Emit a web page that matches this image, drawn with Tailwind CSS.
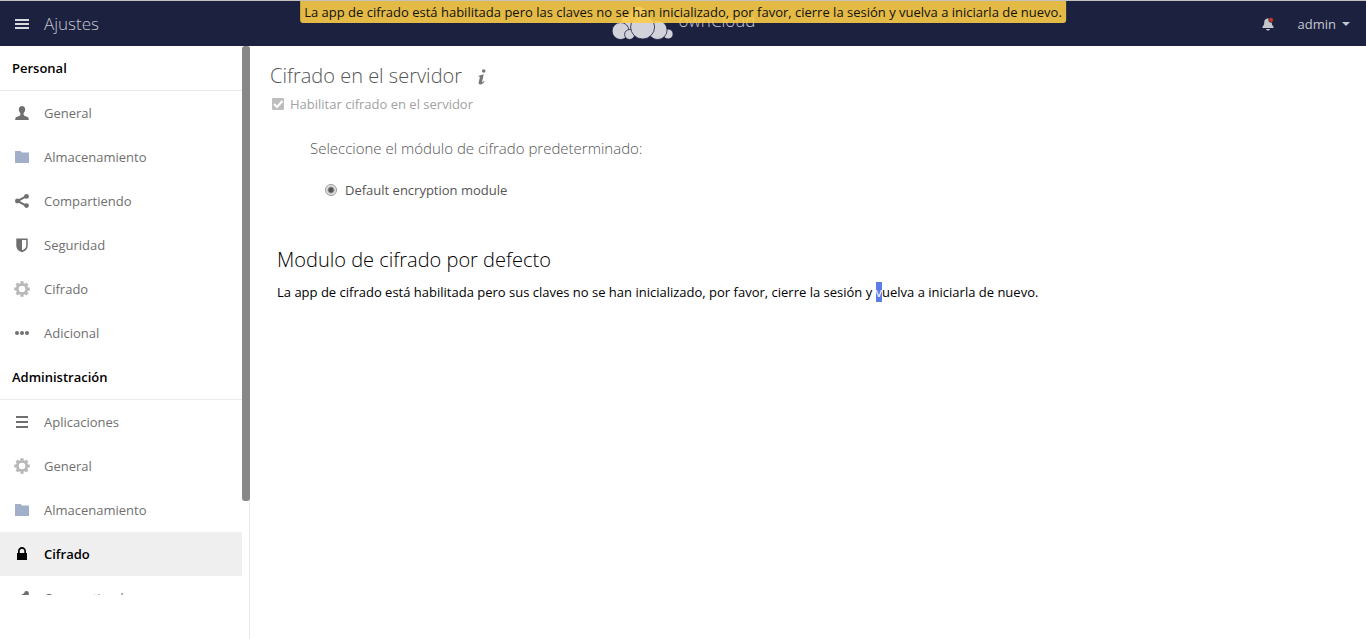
<!DOCTYPE html>
<html lang="es">
<head>
<meta charset="utf-8">
<meta name="viewport" content="width=device-width, initial-scale=1">
<title>Ajustes - ownCloud</title>
<script src="https://cdn.jsdelivr.net/npm/@tailwindcss/browser@4"></script>
</head>
<body class="flex h-screen flex-col overflow-hidden bg-white font-['Open_Sans',sans-serif] text-[13px] leading-5 text-black">
<svg class="hidden" aria-hidden="true">
  <symbol id="user" viewBox="0 0 16 16"><path d="M8 1C6.200 1 4.800 2.300 4.800 4.200c0 1 .3 2 .8 2.900.3.500.7.900.8 1.400.1.500.1 1-.1 1.500-.2.500-.6.700-1.100.9L2.400 12c-.7.400-1 1-1.100 1.600L1.200 15h13.600l-.1-1.400c-.1-.7-.4-1.300-1.100-1.600l-2.800-1.100c-.5-.2-.9-.4-1.100-.9-.2-.5-.2-1-.1-1.500.1-.5.5-.9.800-1.400.5-.9.800-1.900.8-2.900C11.200 2.300 9.800 1 8 1z"/></symbol>
  <symbol id="folder" viewBox="0 0 16 16"><path d="M1 2h5.500l1.500 1.500h7V14H1z"/></symbol>
  <symbol id="share" viewBox="0 0 16 16"><path d="M12.500 3.200 3.500 8l9 4.800" fill="none" stroke="currentColor" stroke-width="2"/><circle cx="3.400" cy="8" r="2.400"/><circle cx="12.500" cy="3.400" r="2.400"/><circle cx="12.500" cy="12.600" r="2.400"/></symbol>
  <symbol id="shield" viewBox="0 0 16 16"><path fill-rule="evenodd" d="M2.300 1.500h11.400v7c0 3.800-2.700 5.700-5.700 6.700-3-1-5.700-2.900-5.700-6.700zM8 3v10.300c2.500-1 4.200-2.400 4.200-4.900V3z"/></symbol>
  <symbol id="gear" viewBox="0 0 16 16"><g fill="none" stroke="currentColor"><circle cx="8" cy="8" r="4.700" stroke-width="2.800"/><path stroke-width="3.200" d="M8 .2v2.400M8 13.400v2.400M.2 8h2.400M13.400 8h2.400M2.600 2.600l1.500 1.500M11.900 11.900l1.500 1.500M13.400 2.600l-1.500 1.500M4.100 11.900l-1.500 1.500"/></g></symbol>
  <symbol id="more" viewBox="0 0 16 16"><circle cx="3" cy="8" r="2"/><circle cx="8" cy="8" r="2"/><circle cx="13" cy="8" r="2"/></symbol>
  <symbol id="list" viewBox="0 0 16 16"><path d="M2 2h12v2H2zM2 7h12v2H2zM2 12h12v2H2z"/></symbol>
  <symbol id="lock" viewBox="0 0 16 16"><path fill-rule="evenodd" d="M8 1C5.800 1 4 2.800 4 5v2H3v7h10V7h-1V5c0-2.200-1.800-4-4-4zm0 1.700c1.300 0 2.300 1 2.300 2.300v2H5.700V5c0-1.300 1-2.300 2.300-2.300z"/></symbol>
</svg>

<header class="relative flex h-[46px] shrink-0 items-center justify-between border-t border-[#c4c0bc] bg-[#1d2140] pl-3.5 pr-4 text-[#c4c6ce]">
  <button type="button" class="flex items-center gap-3.5" aria-label="Menú de aplicaciones">
    <svg class="size-4" viewBox="0 0 16 16" fill="#d8d9e0"><path d="M1 3h14v2H1zM1 7h14v2H1zM1 11h14v2H1z"/></svg>
    <span class="text-[17px] font-light leading-6">Ajustes</span>
  </button>
  <a href="#" class="absolute left-1/2 top-1 flex -translate-x-1/2 items-start gap-1" aria-label="ownCloud">
    <svg class="h-9 w-[64px]" viewBox="0 0 64 36" fill="#d2d2da" stroke="#1d2140" stroke-width=".8">
      <circle cx="19" cy="18" r="9"/><circle cx="28" cy="10.500" r="9"/><circle cx="57.500" cy="29" r="5"/><circle cx="10" cy="26" r="8.500"/><circle cx="19" cy="29.500" r="5"/><circle cx="47" cy="25" r="9.500"/><circle cx="32" cy="22" r="12"/>
    </svg>
    <span class="pt-1 text-[17px] font-light leading-6">ownCloud</span>
  </a>
  <div class="flex items-center gap-[22px]">
    <button type="button" aria-label="Notificaciones">
      <svg class="size-4" viewBox="0 0 16 16"><path fill="#c4c6ce" d="M7 2.500h2c2.200.6 2.800 2.200 2.800 4.500 0 2 1 3 1.700 3.700V12h-11v-1.300C3.200 10 4.200 9 4.200 7c0-2.300.6-3.900 2.800-4.500zM6 13h4c0 .9-.9 1.500-2 1.500S6 13.900 6 13z"/><circle cx="11" cy="4" r="2.400" fill="#c9361f" stroke="#1d2140" stroke-width=".6"/></svg>
    </button>
    <button type="button" class="flex items-center gap-1.5">
      <span>admin</span>
      <svg class="h-1 w-2" viewBox="0 0 8 4" fill="#c4c6ce"><path d="M0 0h8L4 4z"/></svg>
    </button>
  </div>
  <div role="alert" class="absolute left-1/2 top-0 -translate-x-1/2 whitespace-nowrap rounded-b-[3px] bg-[#fbcb48]/90 px-1 py-px text-[#111]">La app de cifrado está habilitada pero las claves no se han inicializado, por favor, cierre la sesión y vuelva a iniciarla de nuevo.</div>
</header>

<div class="flex min-h-0 flex-1">
  <aside class="relative w-[250px] shrink-0 border-r border-[#ebebeb]">
    <nav class="mr-[7px] h-[calc(100%-44px)] overflow-hidden text-[#6f6f6f]" aria-label="Ajustes">
      <h2 class="flex h-[45px] items-center border-b border-[#ebebeb] px-3 font-semibold text-black">Personal</h2>
      <ul>
        <li><a href="#" class="flex h-11 items-center gap-3.5 px-3.5"><svg class="size-4 fill-current"><use href="#user"/></svg>General</a></li>
        <li><a href="#" class="flex h-11 items-center gap-3.5 px-3.5"><svg class="size-4 fill-[#a2afc8]"><use href="#folder"/></svg>Almacenamiento</a></li>
        <li><a href="#" class="flex h-11 items-center gap-3.5 px-3.5"><svg class="size-4 fill-current"><use href="#share"/></svg>Compartiendo</a></li>
        <li><a href="#" class="flex h-11 items-center gap-3.5 px-3.5"><svg class="size-4 fill-current"><use href="#shield"/></svg>Seguridad</a></li>
        <li><a href="#" class="flex h-11 items-center gap-3.5 px-3.5"><svg class="size-4 text-[#b7b7b7]"><use href="#gear"/></svg>Cifrado</a></li>
        <li><a href="#" class="flex h-11 items-center gap-3.5 px-3.5"><svg class="size-4 fill-current"><use href="#more"/></svg>Adicional</a></li>
      </ul>
      <h2 class="flex h-[45px] items-center border-b border-[#ebebeb] px-3 font-semibold text-black">Administración</h2>
      <ul>
        <li><a href="#" class="flex h-11 items-center gap-3.5 px-3.5"><svg class="size-4 fill-current"><use href="#list"/></svg>Aplicaciones</a></li>
        <li><a href="#" class="flex h-11 items-center gap-3.5 px-3.5"><svg class="size-4 text-[#b7b7b7]"><use href="#gear"/></svg>General</a></li>
        <li><a href="#" class="flex h-11 items-center gap-3.5 px-3.5"><svg class="size-4 fill-[#a2afc8]"><use href="#folder"/></svg>Almacenamiento</a></li>
        <li><a href="#" aria-current="page" class="flex h-11 items-center gap-3.5 bg-[#efefef] px-3.5 font-semibold text-black"><svg class="size-4 fill-current"><use href="#lock"/></svg>Cifrado</a></li>
        <li><a href="#" class="flex h-11 items-center gap-3.5 px-3.5"><svg class="size-4 fill-current"><use href="#share"/></svg>Compartiendo</a></li>
      </ul>
    </nav>
    <div class="absolute -right-px top-0 h-[455px] w-2 rounded-[3px] bg-[#888]"></div>
  </aside>

  <main class="min-w-0 flex-1 px-5 pt-4">
    <section class="text-[#555]">
      <h2 class="flex items-center gap-3 text-[20px] font-light leading-7">Cifrado en el servidor
        <a href="#" aria-label="Documentación"><svg class="mt-0.5 size-4" viewBox="0 0 16 16" fill="#777"><circle cx="9.700" cy="2" r="1.800"/><path d="M4.500 6.800c1.800-.3 3.400-1.200 5.300-1.600L8 13.200c.9-.1 1.500-.8 2.100-1.400l.4.500C9.500 14.200 8.100 15.500 6.300 15.500c-1.400 0-1.900-.8-1.600-2.200L5.900 7.900c-.3-.4-.8-.4-1.400-.4z"/></svg></a>
      </h2>
      <label class="ml-0.5 mt-1 flex items-center gap-1.5 text-[#a2a2a2]">
        <input type="checkbox" checked disabled class="peer sr-only">
        <svg class="size-3" viewBox="0 0 12 12"><rect width="12" height="12" rx="1" fill="#bebebe"/><path d="M2 6l3 3 5.500-6" fill="none" stroke="#fff" stroke-width="2"/></svg>
        Habilitar cifrado en el servidor
      </label>
      <div class="ml-10 mt-[22px]">
        <h3 class="text-[15px] font-light leading-6 text-[#555]">Seleccione el módulo de cifrado predeterminado:</h3>
        <label class="ml-[15px] mt-5 flex items-center gap-2">
          <input type="radio" name="module" checked class="size-3 appearance-none rounded-full border border-[#999] bg-[radial-gradient(circle,#555_0_2px,#e4e4e4_4px)]">
          Default encryption module
        </label>
      </div>
    </section>
    <section class="ml-[7px] mt-[46px]">
      <h2 class="text-[20px] font-light leading-7">Modulo de cifrado por defecto</h2>
      <p class="mt-2">La app de cifrado está habilitada pero sus claves no se han inicializado, por favor, cierre la sesión y <mark class="inline-block bg-[#5c7ce8] text-white">v</mark>uelva a iniciarla de nuevo.</p>
    </section>
  </main>
</div>
</body>
</html>
